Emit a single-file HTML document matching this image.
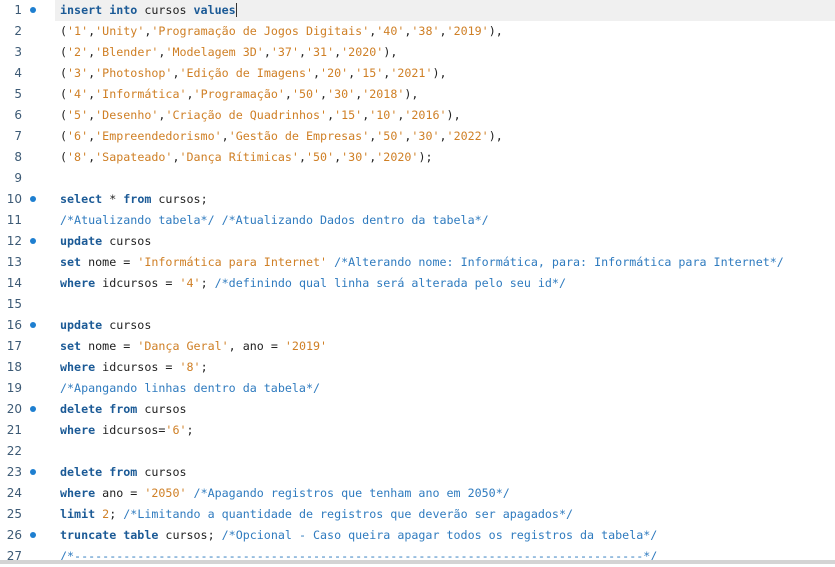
<!DOCTYPE html>
<html><head><meta charset="utf-8"><style>
html,body{margin:0;padding:0;width:835px;height:564px;overflow:hidden;background:#fff;}
.l{position:absolute;left:0;height:21px;width:835px;font-family:"DejaVu Sans Mono","Liberation Mono",monospace;font-size:11.68px;line-height:21px;white-space:pre;color:#222;}
.n{position:absolute;left:0;width:22px;text-align:right;color:#3d5a75;font-family:"DejaVu Sans","Liberation Sans",sans-serif;font-size:12px;}
.d{position:absolute;left:30px;top:7px;width:6px;height:6px;border-radius:50%;background:#1e7fd0;}
.c{position:absolute;left:60px;}
.k{color:#1b5a96;font-weight:bold;}
.s{color:#cf7f25;}
.m{color:#2f7bbf;}
.hl{background:#f0f0f0;}
.bar{position:absolute;left:0;top:560px;width:835px;height:4px;background:#d4d4d4;}
</style></head><body>
<div class="l hl" style="top:0;left:55px;width:780px"></div>
<div class="l" style="top:0"><span class="n">1</span><span class="d"></span><span class="c"><span class="k">insert into</span> cursos <span class="k">values</span><span style="border-left:1.5px solid #333;margin-left:0px"></span></span></div>
<div class="l" style="top:21px"><span class="n">2</span><span class="c">(<span class="s">'1'</span>,<span class="s">'Unity'</span>,<span class="s">'Programação de Jogos Digitais'</span>,<span class="s">'40'</span>,<span class="s">'38'</span>,<span class="s">'2019'</span>),</span></div>
<div class="l" style="top:42px"><span class="n">3</span><span class="c">(<span class="s">'2'</span>,<span class="s">'Blender'</span>,<span class="s">'Modelagem 3D'</span>,<span class="s">'37'</span>,<span class="s">'31'</span>,<span class="s">'2020'</span>),</span></div>
<div class="l" style="top:63px"><span class="n">4</span><span class="c">(<span class="s">'3'</span>,<span class="s">'Photoshop'</span>,<span class="s">'Edição de Imagens'</span>,<span class="s">'20'</span>,<span class="s">'15'</span>,<span class="s">'2021'</span>),</span></div>
<div class="l" style="top:84px"><span class="n">5</span><span class="c">(<span class="s">'4'</span>,<span class="s">'Informática'</span>,<span class="s">'Programação'</span>,<span class="s">'50'</span>,<span class="s">'30'</span>,<span class="s">'2018'</span>),</span></div>
<div class="l" style="top:105px"><span class="n">6</span><span class="c">(<span class="s">'5'</span>,<span class="s">'Desenho'</span>,<span class="s">'Criação de Quadrinhos'</span>,<span class="s">'15'</span>,<span class="s">'10'</span>,<span class="s">'2016'</span>),</span></div>
<div class="l" style="top:126px"><span class="n">7</span><span class="c">(<span class="s">'6'</span>,<span class="s">'Empreendedorismo'</span>,<span class="s">'Gestão de Empresas'</span>,<span class="s">'50'</span>,<span class="s">'30'</span>,<span class="s">'2022'</span>),</span></div>
<div class="l" style="top:147px"><span class="n">8</span><span class="c">(<span class="s">'8'</span>,<span class="s">'Sapateado'</span>,<span class="s">'Dança Rítimicas'</span>,<span class="s">'50'</span>,<span class="s">'30'</span>,<span class="s">'2020'</span>);</span></div>
<div class="l" style="top:168px"><span class="n">9</span></div>
<div class="l" style="top:189px"><span class="n">10</span><span class="d"></span><span class="c"><span class="k">select</span> * <span class="k">from</span> cursos;</span></div>
<div class="l" style="top:210px"><span class="n">11</span><span class="c"><span class="m">/*Atualizando tabela*/ /*Atualizando Dados dentro da tabela*/</span></span></div>
<div class="l" style="top:231px"><span class="n">12</span><span class="d"></span><span class="c"><span class="k">update</span> cursos</span></div>
<div class="l" style="top:252px"><span class="n">13</span><span class="c"><span class="k">set</span> nome = <span class="s">'Informática para Internet'</span> <span class="m">/*Alterando nome: Informática, para: Informática para Internet*/</span></span></div>
<div class="l" style="top:273px"><span class="n">14</span><span class="c"><span class="k">where</span> idcursos = <span class="s">'4'</span>; <span class="m">/*definindo qual linha será alterada pelo seu id*/</span></span></div>
<div class="l" style="top:294px"><span class="n">15</span></div>
<div class="l" style="top:315px"><span class="n">16</span><span class="d"></span><span class="c"><span class="k">update</span> cursos</span></div>
<div class="l" style="top:336px"><span class="n">17</span><span class="c"><span class="k">set</span> nome = <span class="s">'Dança Geral'</span>, ano = <span class="s">'2019'</span></span></div>
<div class="l" style="top:357px"><span class="n">18</span><span class="c"><span class="k">where</span> idcursos = <span class="s">'8'</span>;</span></div>
<div class="l" style="top:378px"><span class="n">19</span><span class="c"><span class="m">/*Apangando linhas dentro da tabela*/</span></span></div>
<div class="l" style="top:399px"><span class="n">20</span><span class="d"></span><span class="c"><span class="k">delete from</span> cursos</span></div>
<div class="l" style="top:420px"><span class="n">21</span><span class="c"><span class="k">where</span> idcursos=<span class="s">'6'</span>;</span></div>
<div class="l" style="top:441px"><span class="n">22</span></div>
<div class="l" style="top:462px"><span class="n">23</span><span class="d"></span><span class="c"><span class="k">delete from</span> cursos</span></div>
<div class="l" style="top:483px"><span class="n">24</span><span class="c"><span class="k">where</span> ano = <span class="s">'2050'</span> <span class="m">/*Apagando registros que tenham ano em 2050*/</span></span></div>
<div class="l" style="top:504px"><span class="n">25</span><span class="c"><span class="k">limit</span> <span class="s">2</span>; <span class="m">/*Limitando a quantidade de registros que deverão ser apagados*/</span></span></div>
<div class="l" style="top:525px"><span class="n">26</span><span class="d"></span><span class="c"><span class="k">truncate table</span> cursos; <span class="m">/*Opcional - Caso queira apagar todos os registros da tabela*/</span></span></div>
<div class="l" style="top:546px"><span class="n">27</span><span class="c"><span class="m">/*---------------------------------------------------------------------------------*/</span></span></div>
<div class="bar"></div>
</body></html>
